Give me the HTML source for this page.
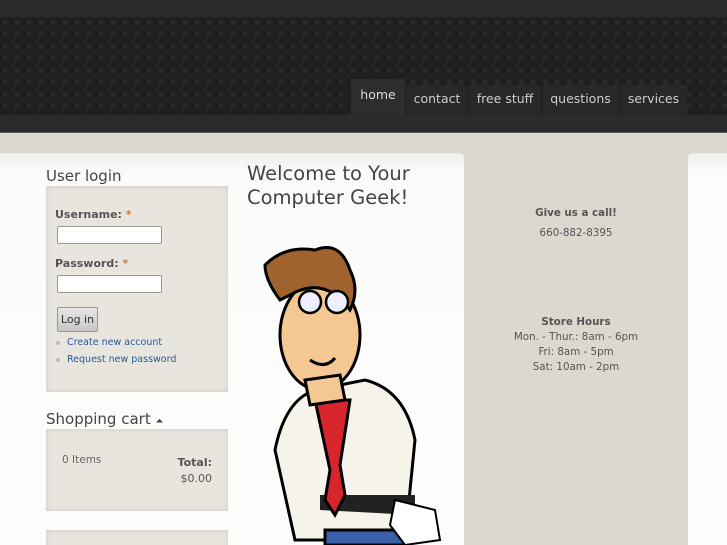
<!DOCTYPE html>
<html><head><style>
html,body{margin:0;width:727px;height:545px;overflow:hidden}
body{background:#ddd8cf;font-family:"DejaVu Sans",sans-serif;position:relative}
.top{position:absolute;left:0;top:0;width:727px;height:17px;background:#2b2b2b}
.pat{position:absolute;left:0;top:17px;width:727px;height:98px;background-color:#1e1e1e;background-image:radial-gradient(circle at 5px 5px,#2a2a2a 2px,transparent 3px),linear-gradient(45deg,transparent 45%,#272727 50%,transparent 55%),linear-gradient(-45deg,transparent 45%,#272727 50%,transparent 55%);background-size:12px 12px}
.band{position:absolute;left:0;top:115px;width:727px;height:17px;background:#2b2b2b;border-bottom:1px solid #555}
.nav div{position:absolute;top:85px;height:30px;background:#282828;color:#ccc;font-size:12.5px;text-align:center;line-height:27px;border-left:1px solid #1e1e1e;box-sizing:border-box}
.home{position:absolute;left:351px;top:79px;width:54px;height:36px;background:#2d2d2d;color:#ddd;font-size:12.5px;text-align:center;line-height:32px}
.main{position:absolute;left:0;top:153px;width:464px;height:400px;background:linear-gradient(#eeeeec,#fbfbfa 20px,#fcfcfb);border-radius:0 5px 0 0}
.rp{position:absolute;left:688px;top:153px;width:60px;height:400px;background:linear-gradient(#eeeeec,#fcfcfb 20px);border-radius:5px 0 0 0}
h2{position:absolute;margin:0;font-weight:normal;color:#444;font-size:15px}
.box{position:absolute;left:46px;width:182px;background:#e8e5df;box-shadow:inset 0 0 6px #cfcbc2}
label{position:absolute;font-size:11px;font-weight:bold;color:#555;left:9px}
label span{color:#e0762a}
.in{position:absolute;left:11px;width:103px;height:16px;background:#fff;border:1px solid #999;border-radius:2px}
.btn{position:absolute;left:11px;top:121px;width:39px;height:23px;border:1px solid #999;border-radius:2px;background:linear-gradient(#e6e6e6,#c8c8c8);font-size:11px;color:#333;text-align:center;line-height:23px}
.lk{position:absolute;left:21px;font-size:9.5px;color:#2a5a9a}
.lk:before{content:"";position:absolute;left:-11px;top:4px;width:4px;height:4px;border-radius:2px;background:#bbb}
.r{position:absolute;left:464px;width:224px;text-align:center;font-size:10.3px;color:#555;line-height:15px}
</style></head><body>
<div class="top"></div><div class="pat"></div><div class="band"></div>
<div class="nav"><div style="left:405px;width:63px">contact</div><div style="left:468px;width:73px">free stuff</div><div style="left:541px;width:78px">questions</div><div style="left:619px;width:68px">services</div></div>
<div class="home">home</div>
<div class="main"></div><div class="rp"></div>
<h2 style="left:46px;top:167px">User login</h2>
<div class="box" style="top:186px;height:206px">
<label style="top:22px">Username: <span>*</span></label>
<div class="in" style="top:40px"></div>
<label style="top:71px">Password: <span>*</span></label>
<div class="in" style="top:89px"></div>
<div class="btn">Log in</div>
<div class="lk" style="top:151px">Create new account</div>
<div class="lk" style="top:168px">Request new password</div>
</div>
<h2 style="left:46px;top:410px">Shopping cart <span style="font-size:10px">⏶</span></h2>
<div class="box" style="top:429px;height:82px">
<div style="position:absolute;left:16px;top:25px;font-size:10.5px;color:#666">0 Items</div>
<div style="position:absolute;right:16px;top:26px;font-size:11px;color:#555;text-align:right;line-height:16px"><b>Total:</b><br>$0.00</div>
</div>
<div class="box" style="top:530px;height:30px"></div>
<h2 style="left:247px;top:162px;font-size:19.5px;line-height:24px">Welcome to Your<br>Computer Geek!</h2>
<svg style="position:absolute;left:255px;top:240px" width="190" height="305" viewBox="0 0 190 305">
<path d="M40 300 L20 210 Q30 160 60 150 L110 140 Q150 150 160 200 L150 300Z" fill="#f6f3ea" stroke="#000" stroke-width="3"/>
<path d="M70 290 L160 290 L150 305 L70 305Z" fill="#3b5fa8" stroke="#000" stroke-width="3"/>
<path d="M65 255 L160 255 L160 275 L65 270Z" fill="#222"/>
<path d="M60 160 L75 230 L70 260 L80 275 L90 255 L85 225 L95 160Z" fill="#d8242b" stroke="#000" stroke-width="3"/>
<path d="M140 260 L180 270 L185 300 L150 305 L135 285Z" fill="#fff" stroke="#000" stroke-width="2"/>
<ellipse cx="65" cy="95" rx="40" ry="55" fill="#f5c793" stroke="#000" stroke-width="3"/>
<path d="M50 140 L55 165 L90 160 L85 135Z" fill="#f5c793" stroke="#000" stroke-width="3"/>
<path d="M10 25 Q30 5 60 10 Q85 0 95 30 Q105 50 95 70 Q70 35 35 55 L25 60 Q10 40 10 25Z" fill="#a0622e" stroke="#000" stroke-width="3"/>
<circle cx="55" cy="62" r="11" fill="#eef" stroke="#000" stroke-width="2.5"/>
<circle cx="82" cy="62" r="11" fill="#eef" stroke="#000" stroke-width="2.5"/>
<path d="M55 120 Q70 130 80 118" fill="none" stroke="#000" stroke-width="3"/>
</svg>
<div class="r" style="top:206px"><b>Give us a call!</b></div>
<div class="r" style="top:226px">660-882-8395</div>
<div class="r" style="top:315px"><b>Store Hours</b><br>Mon. - Thur.: 8am - 6pm<br>Fri: 8am - 5pm<br>Sat: 10am - 2pm</div>
</body></html>
